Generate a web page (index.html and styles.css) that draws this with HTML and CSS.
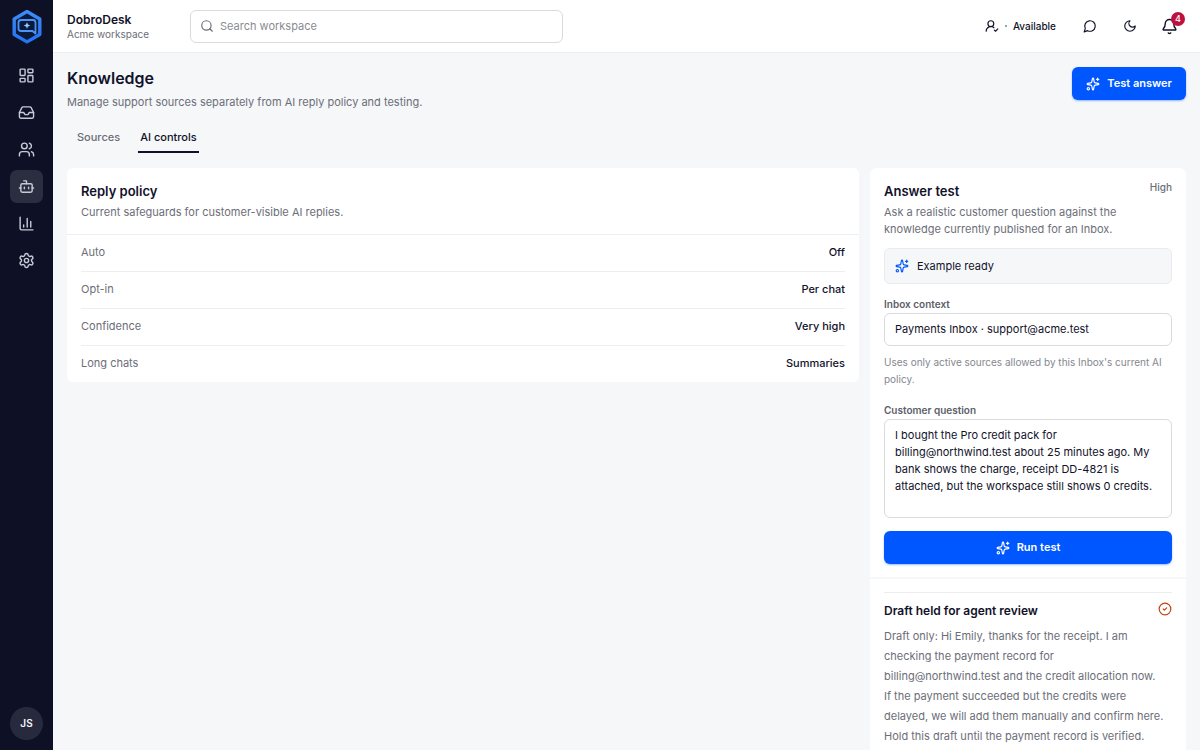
FILE: index.html
```html
<!DOCTYPE html>
<html lang="en">
<head>
  <meta charset="UTF-8">
  <meta name="viewport" content="width=device-width, initial-scale=1.0">
  <title>Knowledge - DobroDesk</title>
  <link rel="stylesheet" href="styles.css">
</head>
<body>
  <!-- Shared icons -->
  <svg class="sprite" aria-hidden="true">
    <symbol id="sparkles" viewBox="0 0 24 24">
      <path d="M11.017 2.814a1 1 0 0 1 1.966 0l1.051 5.558a2 2 0 0 0 1.594 1.594l5.558 1.051a1 1 0 0 1 0 1.966l-5.558 1.051a2 2 0 0 0-1.594 1.594l-1.051 5.558a1 1 0 0 1-1.966 0l-1.051-5.558a2 2 0 0 0-1.594-1.594l-5.558-1.051a1 1 0 0 1 0-1.966l5.558-1.051a2 2 0 0 0 1.594-1.594z"/>
      <path d="M20 2v4M22 4h-4"/>
      <circle cx="4" cy="20" r="2"/>
    </symbol>
  </svg>

  <div class="app">
    <aside class="sidebar">
      <a class="logo" href="#" aria-label="DobroDesk">
        <svg viewBox="0 0 32 36" width="32" height="36">
          <defs>
            <linearGradient id="logo-blue" x1="0" y1="0" x2="0" y2="1">
              <stop offset="0" stop-color="#3d8bf5"/>
              <stop offset="1" stop-color="#2474f5"/>
            </linearGradient>
          </defs>
          <path d="M16 2.600 28.800 9.900v15.600L16 32.900 3.200 25.500V9.900z" fill="#0b1a3c" stroke="url(#logo-blue)" stroke-width="3.400" stroke-linejoin="round"/>
          <path d="M10 11h12a2.500 2.500 0 0 1 2.500 2.500v11l-3-2.500H10a2.500 2.500 0 0 1-2.500-2.500v-6a2.500 2.500 0 0 1 2.500-2.500z" fill="#0b1a3c" stroke="#4a94f8" stroke-width="1.800" stroke-linejoin="round"/>
          <path d="M16 13.200l1 2.300 2.300 1-2.300 1-1 2.300-1-2.300-2.300-1 2.300-1z" fill="#8fc8ff"/>
        </svg>
      </a>
      <nav class="nav" aria-label="Main">
        <a href="#" aria-label="Dashboard">
          <svg class="icon" viewBox="0 0 24 24"><rect x="3" y="3" width="7" height="9" rx="1"/><rect x="14" y="3" width="7" height="5" rx="1"/><rect x="14" y="12" width="7" height="9" rx="1"/><rect x="3" y="16" width="7" height="5" rx="1"/></svg>
        </a>
        <a href="#" aria-label="Inbox">
          <svg class="icon" viewBox="0 0 24 24"><path d="M22 12h-6l-2 3h-4l-2-3H2"/><path d="M5.450 5.110 2 12v6a2 2 0 0 0 2 2h16a2 2 0 0 0 2-2v-6l-3.450-6.890A2 2 0 0 0 16.760 4H7.240a2 2 0 0 0-1.790 1.110z"/></svg>
        </a>
        <a href="#" aria-label="Contacts">
          <svg class="icon" viewBox="0 0 24 24"><path d="M16 21v-2a4 4 0 0 0-4-4H6a4 4 0 0 0-4 4v2"/><circle cx="9" cy="7" r="4"/><path d="M22 21v-2a4 4 0 0 0-3-3.870M16 3.130a4 4 0 0 1 0 7.750"/></svg>
        </a>
        <a class="active" href="#" aria-label="Knowledge" aria-current="page">
          <svg class="icon" viewBox="0 0 24 24"><path d="M12 8V4H8"/><rect x="4" y="8" width="16" height="12" rx="2"/><path d="M2 14h2M20 14h2M15 13v2M9 13v2"/></svg>
        </a>
        <a href="#" aria-label="Reports">
          <svg class="icon" viewBox="0 0 24 24"><path d="M3 3v16a2 2 0 0 0 2 2h16M8 17v-3M13 17V5M18 17V9"/></svg>
        </a>
        <a href="#" aria-label="Settings">
          <svg class="icon" viewBox="0 0 24 24"><path d="M9.671 4.136a2.340 2.340 0 0 1 4.659 0 2.340 2.340 0 0 0 3.319 1.915 2.340 2.340 0 0 1 2.330 4.033 2.340 2.340 0 0 0 0 3.831 2.340 2.340 0 0 1-2.330 4.033 2.340 2.340 0 0 0-3.319 1.915 2.340 2.340 0 0 1-4.659 0 2.340 2.340 0 0 0-3.320-1.915 2.340 2.340 0 0 1-2.330-4.033 2.340 2.340 0 0 0 0-3.831A2.340 2.340 0 0 1 6.350 6.051a2.340 2.340 0 0 0 3.319-1.915"/><circle cx="12" cy="12" r="3"/></svg>
        </a>
      </nav>
      <button class="avatar" type="button">JS</button>
    </aside>

    <div class="page">
      <header class="topbar">
        <div class="brand">
          <strong>DobroDesk</strong>
          <span>Acme workspace</span>
        </div>
        <label class="search">
          <svg class="icon" viewBox="0 0 24 24"><circle cx="11" cy="11" r="8"/><path d="m21 21-4.300-4.300"/></svg>
          <input type="search" placeholder="Search workspace" aria-label="Search workspace">
        </label>
        <div class="actions">
          <button class="status" type="button">
            <svg class="icon" viewBox="0 0 24 24"><path d="M2 21a8 8 0 0 1 13.292-6"/><circle cx="10" cy="8" r="5"/><path d="m16 19 2 2 4-4"/></svg>
            <span class="dot"></span>
            Available
          </button>
          <button class="icon-button" type="button" aria-label="Chat">
            <svg class="icon" viewBox="0 0 24 24"><path d="M7.900 20A9 9 0 1 0 4 16.100L2 22z"/></svg>
          </button>
          <button class="icon-button" type="button" aria-label="Dark mode">
            <svg class="icon" viewBox="0 0 24 24"><path d="M12 3a6 6 0 0 0 9 9 9 9 0 1 1-9-9z"/></svg>
          </button>
          <button class="icon-button bell" type="button" aria-label="Notifications">
            <svg class="icon" viewBox="0 0 24 24"><path d="M10.268 21a2 2 0 0 0 3.464 0"/><path d="M3.262 15.326A1 1 0 0 0 4 17h16a1 1 0 0 0 .740-1.673C19.410 13.956 18 12.499 18 8A6 6 0 0 0 6 8c0 4.499-1.411 5.956-2.738 7.326"/></svg>
            <span class="badge">4</span>
          </button>
        </div>
      </header>

      <main class="content">
        <div class="page-head">
          <div>
            <h1>Knowledge</h1>
            <p>Manage support sources separately from AI reply policy and testing.</p>
          </div>
          <button class="primary" type="button">
            <svg class="icon"><use href="#sparkles"/></svg>
            Test answer
          </button>
        </div>

        <nav class="tabs" aria-label="Knowledge sections">
          <a href="#">Sources</a>
          <a class="active" href="#" aria-current="page">AI controls</a>
        </nav>

        <div class="columns">
          <section class="card">
            <div class="card-head">
              <h2>Reply policy</h2>
              <p>Current safeguards for customer-visible AI replies.</p>
            </div>
            <dl class="policy">
              <div><dt>Auto</dt><dd>Off</dd></div>
              <div><dt>Opt-in</dt><dd>Per chat</dd></div>
              <div><dt>Confidence</dt><dd>Very high</dd></div>
              <div><dt>Long chats</dt><dd>Summaries</dd></div>
            </dl>
          </section>

          <section class="card">
            <form class="test">
              <div class="test-head">
                <h2>Answer test</h2>
                <span>High</span>
              </div>
              <p class="intro">Ask a realistic customer question against the knowledge currently published for an Inbox.</p>
              <div class="notice">
                <svg class="icon"><use href="#sparkles"/></svg>
                Example ready
              </div>
              <label for="inbox">Inbox context</label>
              <select id="inbox">
                <option>Payments Inbox · support@acme.test</option>
              </select>
              <p class="hint">Uses only active sources allowed by this Inbox's current AI policy.</p>
              <label for="question">Customer question</label>
              <textarea id="question">I bought the Pro credit pack for billing@northwind.test about 25 minutes ago. My bank shows the charge, receipt DD-4821 is attached, but the workspace still shows 0 credits.</textarea>
              <button class="primary" type="button">
                <svg class="icon"><use href="#sparkles"/></svg>
                Run test
              </button>
            </form>
            <div class="result">
              <div class="result-head">
                <h3>Draft held for agent review</h3>
                <svg class="icon" viewBox="0 0 24 24"><circle cx="12" cy="12" r="10"/><path d="m9 12 2 2 4-4"/></svg>
              </div>
              <p>Draft only: Hi Emily, thanks for the receipt. I am checking the payment record for billing@northwind.test and the credit allocation now. If the payment succeeded but the credits were delayed, we will add them manually and confirm here. Hold this draft until the payment record is verified.</p>
            </div>
          </section>
        </div>
      </main>
    </div>
  </div>
</body>
</html>
```
FILE: styles.css
```css
* {
  box-sizing: border-box;
}

body {
  margin: 0;
  font-family: Inter, "Liberation Sans", sans-serif;
  font-size: 11px;
  line-height: 17px;
  color: #11122a;
  background-color: #f5f7f9;
}

h1, h2, h3, p, dl, dd {
  margin: 0;
}

a {
  color: inherit;
  text-decoration: none;
}

button, input, select, textarea {
  font: inherit;
  color: inherit;
}

button {
  display: flex;
  align-items: center;
  justify-content: center;
  padding: 0;
  border: none;
  background: none;
  cursor: pointer;
}

.sprite {
  display: none;
}

.icon {
  width: 14px;
  height: 14px;
  flex: none;
  fill: none;
  stroke: currentColor;
  stroke-width: 2;
  stroke-linecap: round;
  stroke-linejoin: round;
}

.app {
  display: flex;
  height: 100vh;
}

/* Sidebar */
.sidebar {
  display: flex;
  flex-direction: column;
  align-items: center;
  width: 53px;
  flex: none;
  padding: 9px 0 10px;
  background-color: #0e1126;
  color: #c6c9d6;
}

.logo {
  display: flex;
}

.nav {
  display: flex;
  flex-direction: column;
  gap: 4px;
  margin-top: 14px;
}

.nav a {
  display: flex;
  align-items: center;
  justify-content: center;
  width: 33px;
  height: 33px;
  border-radius: 7px;
}

.nav a.active {
  background-color: #2b2e41;
}

.nav .icon {
  width: 17px;
  height: 17px;
}

.avatar {
  width: 33px;
  height: 33px;
  margin-top: auto;
  border-radius: 50%;
  background-color: #272a3d;
  color: #f5f6fa;
  font-size: 10px;
  font-weight: 600;
}

/* Top bar */
.page {
  display: flex;
  flex-direction: column;
  flex: 1;
  min-width: 0;
}

.topbar {
  display: flex;
  align-items: center;
  height: 53px;
  flex: none;
  padding: 0 14px;
  background-color: #fff;
  border-bottom: 1px solid #eceef1;
}

.brand {
  display: flex;
  flex-direction: column;
  width: 123px;
  padding-top: 2px;
  line-height: 15px;
}

.brand strong {
  font-size: 12px;
  font-weight: 600;
}

.brand span {
  font-size: 10px;
  color: #6c6e78;
}

.search {
  display: flex;
  align-items: center;
  gap: 6px;
  flex: 0 1 373px;
  height: 33px;
  padding: 0 9px;
  border: 1px solid #d9dbde;
  border-radius: 6px;
  color: #6c6e78;
}

.search input {
  flex: 1;
  min-width: 0;
  padding: 0;
  border: none;
  outline: none;
  background: none;
}

.search input::placeholder {
  color: #898b93;
}

.actions {
  display: flex;
  align-items: center;
  gap: 7px;
  margin-left: auto;
}

.status {
  gap: 6px;
  height: 33px;
  margin-right: 10px;
  font-size: 10px;
  font-weight: 500;
}

.status .dot {
  width: 2px;
  height: 2px;
  border-radius: 50%;
  background-color: #4f9a86;
}

.icon-button {
  position: relative;
  width: 33px;
  height: 33px;
}

.bell .icon {
  width: 17px;
  height: 17px;
}

.badge {
  position: absolute;
  top: 2px;
  right: 1px;
  width: 14px;
  height: 14px;
  border-radius: 50%;
  background-color: #bd123f;
  color: #fff;
  font-size: 9px;
  font-weight: 500;
  line-height: 14px;
}

/* Page content */
.content {
  flex: 1;
  min-height: 0;
  padding: 14px;
  overflow-y: auto;
  scrollbar-width: none;
}

.page-head {
  display: flex;
  align-items: flex-start;
  justify-content: space-between;
}

h1 {
  font-size: 16px;
  font-weight: 600;
  line-height: 23px;
}

.page-head p {
  margin-top: 4px;
  color: #6c6e78;
}

.primary {
  gap: 7px;
  height: 33px;
  padding: 0 14px;
  border-radius: 6px;
  background-color: #0057ff;
  color: #fff;
  font-weight: 600;
  box-shadow: 0 1px 2px rgba(0, 87, 255, 0.4);
}

.tabs {
  display: flex;
  gap: 16px;
  margin: 12px 0 15px;
  padding-left: 8px;
}

.tabs a {
  padding: 6px 2px 5px;
  border-bottom: 2px solid transparent;
  color: #6c6e78;
  font-weight: 500;
}

.tabs a.active {
  border-color: #11122a;
  color: #11122a;
}

.columns {
  display: grid;
  grid-template-columns: minmax(0, 1fr) 316px;
  gap: 11px;
  align-items: start;
}

.card {
  border-radius: 6px;
  background-color: #fff;
}

.card p {
  color: #6c6e78;
}

.card-head {
  padding: 13px 14px;
  border-bottom: 1px solid #eceef1;
}

h2 {
  font-size: 13px;
  font-weight: 600;
  line-height: 20px;
}

.card-head p {
  margin-top: 3px;
}

.policy {
  padding: 0 14px;
}

.policy div {
  display: flex;
  justify-content: space-between;
  padding: 9px 0 10px;
  border-bottom: 1px solid #eceef1;
}

.policy div:last-child {
  border-bottom: none;
}

.policy dt {
  color: #6c6e78;
}

.policy dd {
  font-weight: 500;
}

/* Answer test */
.test {
  display: flex;
  flex-direction: column;
  padding: 13px 14px;
  border-bottom: 2px solid #f5f7f9;
}

.test-head {
  display: flex;
  justify-content: space-between;
}

.test-head span {
  font-size: 10px;
  font-weight: 500;
  line-height: 13px;
  color: #6c6e78;
}

.intro {
  margin-top: 3px;
}

.notice {
  display: flex;
  align-items: center;
  gap: 8px;
  height: 36px;
  margin: 10px 0 12px;
  padding: 0 10px;
  border: 1px solid #e9ebee;
  border-radius: 6px;
  background-color: #f5f7f9;
}

.notice .icon {
  color: #0057ff;
}

.test label {
  font-size: 10px;
  font-weight: 600;
  color: #5c5e69;
}

.test select, .test textarea {
  width: 100%;
  padding: 7px 10px;
  border: 1px solid #d9dbde;
  border-radius: 6px;
  background-color: #fff;
}

.test select {
  height: 33px;
  appearance: none;
}

.test textarea {
  height: 99px;
  resize: none;
}

.test .hint {
  margin: 8px 0 14px;
  font-size: 10px;
  color: #85878f;
}

.test .primary {
  margin-top: 13px;
}

.result {
  margin: 13px 14px;
  padding-top: 8px;
  border-top: 1px solid #eceef1;
}

.result-head {
  display: flex;
  justify-content: space-between;
}

h3 {
  font-size: 12px;
  font-weight: 600;
  line-height: 20px;
}

.result-head .icon {
  margin-top: 1px;
  color: #c2410c;
}

.result p {
  margin-top: 5px;
  padding-right: 8px;
  line-height: 20px;
}
```
